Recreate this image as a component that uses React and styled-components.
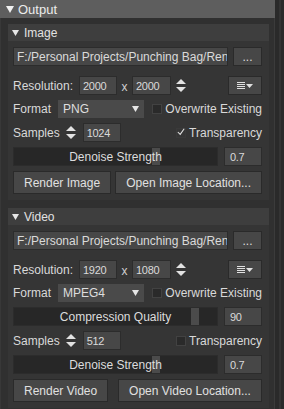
import React from 'react';
import styled, { createGlobalStyle } from 'styled-components';

const GlobalStyle = createGlobalStyle`
  html, body {
    margin: 0;
    padding: 0;
    background: #2b2b2b;
  }
  * {
    box-sizing: border-box;
  }
`;

const Arrow = ({ w = 7, h = 6, color = '#e6e6e6' }) => (
  <svg width={w} height={h} viewBox={`0 0 ${w} ${h}`}>
    <polygon points={`0,0 ${w},0 ${w / 2},${h}`} fill={color} />
  </svg>
);

const SpinIcon = () => (
  <svg width="10" height="13" viewBox="0 0 10 13">
    <polygon points="0,5 10,5 5,0" fill="#e2e2e2" />
    <polygon points="0,8 10,8 5,13" fill="#e2e2e2" />
  </svg>
);

const MenuIcon = () => (
  <svg width="16" height="8" viewBox="0 0 16 8">
    <rect x="0" y="0" width="8" height="1" fill="#e0e0e0" />
    <rect x="0" y="2" width="8" height="1" fill="#e0e0e0" />
    <rect x="0" y="4" width="8" height="1" fill="#e0e0e0" />
    <rect x="0" y="6" width="8" height="1" fill="#e0e0e0" />
    <polygon points="9,2 16,2 12.5,6" fill="#e0e0e0" />
  </svg>
);

const CheckMark = () => (
  <svg width="10" height="10" viewBox="0 0 10 10">
    <polyline points="1,5 4,8 9,1" fill="none" stroke="#e4e4e4" strokeWidth="1.3" />
  </svg>
);

const Root = styled.div`
  display: flex;
  width: 284px;
  height: 409px;
  overflow: hidden;
  background: #2b2b2b;
  font-family: 'Liberation Sans', Arial, sans-serif;
  color: #d9d9d9;
`;

const Panel = styled.div`
  width: 275px;
  display: flex;
  flex-direction: column;
`;

const PanelHeader = styled.div`
  height: 18px;
  flex: 0 0 18px;
  background: #5e5e5e;
  display: flex;
  align-items: center;
  gap: 4px;
  padding-left: 6px;
  font-size: 13px;
  color: #ececec;
`;

const PanelBody = styled.div`
  flex: 1;
  background: #303030;
  border-left: 1px solid #383838;
  border-right: 1px solid #3b3b3b;
  padding: 6px 5px 0 7px;
  display: flex;
  flex-direction: column;
  gap: 8px;
`;

const Scrollbar = styled.div`
  flex: 1;
  background: #2a2a2a;
  border-left: 4px solid #2a2a2a;
  display: flex;
  & > div {
    width: 2px;
    background: #343434;
  }
`;

const Section = styled.div`
  display: flex;
  flex-direction: column;
`;

const SectionHeader = styled.div`
  height: 17px;
  background: #3e3e3e;
  display: flex;
  align-items: center;
  gap: 5px;
  padding-left: 4px;
  font-size: 12px;
  color: #e2e2e2;
`;

const SectionBody = styled.div`
  background: #353535;
  padding: 6px 7px 6px 5px;
  display: flex;
  flex-direction: column;
  gap: 5px;
`;

const Row = styled.div`
  display: flex;
  align-items: center;
  height: ${(p) => p.h || 19}px;
  gap: ${(p) => p.gap || 0}px;
  margin-bottom: ${(p) => p.mb || 0}px;
  justify-content: ${(p) => p.justify || 'flex-start'};
`;

const Label = styled.span`
  font-size: 12px;
  white-space: nowrap;
  color: #d9d9d9;
  margin-right: ${(p) => p.mr || 0}px;
`;

const Field = styled.div`
  height: 19px;
  width: ${(p) => (p.w ? `${p.w}px` : 'auto')};
  flex: ${(p) => (p.w ? '0 0 auto' : '1')};
  min-width: 0;
  background: #474747;
  border: 1px solid #2c2c2c;
  display: flex;
  align-items: center;
  padding-left: ${(p) => p.pl || 3}px;
  font-size: ${(p) => (p.num ? 11 : 12)}px;
  letter-spacing: ${(p) => (p.num ? '-0.3px' : '0')};
  color: #dadada;
  overflow: hidden;
  white-space: nowrap;
`;

const PathText = styled.span`
  display: block;
  overflow: hidden;
  white-space: nowrap;
  max-width: 100%;
`;

const SmallButton = styled.div`
  width: ${(p) => p.w}px;
  height: 19px;
  background: #474747;
  border: 1px solid #2a2a2a;
  display: flex;
  align-items: center;
  justify-content: center;
  font-size: 12px;
  color: #dedede;
  margin-left: ${(p) => (p.push ? 'auto' : '0')};
`;

const Times = styled.span`
  width: 15px;
  text-align: center;
  font-size: 12px;
  color: #d0d0d0;
  padding-top: 3px;
`;

const Spin = styled.div`
  display: flex;
  align-items: center;
  margin: 0 ${(p) => p.mr || 0}px 0 ${(p) => p.ml || 0}px;
`;

const Select = styled.div`
  width: 91px;
  height: 18px;
  background: #4a4a4a;
  display: flex;
  align-items: center;
  justify-content: space-between;
  padding: 0 5px 0 5px;
  font-size: 12px;
  color: #dedede;
  margin-right: 8px;
`;

const Check = styled.div`
  display: flex;
  align-items: center;
  gap: 3px;
  margin-left: ${(p) => (p.right ? 'auto' : '0')};
`;

const Box = styled.div`
  width: 10px;
  height: 10px;
  background: ${(p) => (p.checked ? '#363636' : '#2a2a2a')};
  border: 1px solid ${(p) => (p.checked ? '#3a3a3a' : '#424242')};
  display: flex;
  align-items: center;
  justify-content: center;
  & svg {
    margin-top: -1px;
  }
`;

const Slider = styled.div`
  flex: 1;
  height: 19px;
  background: #272727;
  border: 1px solid #2c2c2c;
  position: relative;
  display: flex;
  align-items: center;
  justify-content: center;
  font-size: 12px;
  color: #dcdcdc;
`;

const Handle = styled.div`
  position: absolute;
  top: 0;
  bottom: 0;
  width: 8px;
  background: #4b4b4b;
`;

const SliderText = styled.span`
  position: relative;
`;

const Button = styled.div`
  height: 23px;
  padding: 0 10px;
  background: #474747;
  border: 1px solid #2a2a2a;
  display: flex;
  align-items: center;
  justify-content: center;
  font-size: 12px;
  color: #e0e0e0;
  white-space: nowrap;
  flex: ${(p) => (p.w ? `0 0 ${p.w}px` : '0 0 auto')};
`;

const SliderRow = ({ label, value, pos }) => (
  <Row gap={6}>
    <Slider>
      <Handle style={{ left: `${pos * 197}px` }} />
      <SliderText>{label}</SliderText>
    </Slider>
    <Field w={38} pl={5} num>
      {value}
    </Field>
  </Row>
);

const RenderSection = ({ title, res, format, checked, compression, samples, openWidth }) => (
  <Section>
    <SectionHeader>
      <Arrow />
      {title}
    </SectionHeader>
    <SectionBody>
      <Row gap={5} mb={5}>
        <Field>
          <PathText>F:/Personal Projects/Punching Bag/Rend</PathText>
        </Field>
        <SmallButton w={29}>...</SmallButton>
      </Row>
      <Row>
        <Label mr={6}>Resolution:</Label>
        <Field w={38} num>{res[0]}</Field>
        <Times>x</Times>
        <Field w={39} num>{res[1]}</Field>
        <Spin ml={5}>
          <SpinIcon />
        </Spin>
        <SmallButton w={34} push>
          <MenuIcon />
        </SmallButton>
      </Row>
      <Row h={18}>
        <Label mr={7}>Format</Label>
        <Select>
          {format}
          <Arrow />
        </Select>
        <Check>
          <Box />
          <Label>Overwrite Existing</Label>
        </Check>
      </Row>
      {compression && <SliderRow label="Compression Quality" value="90" pos={0.9} />}
      <Row>
        <Label mr={6}>Samples</Label>
        <Spin mr={7}>
          <SpinIcon />
        </Spin>
        <Field w={38} num>{samples}</Field>
        <Check right>
          <Box checked={checked}>{checked && <CheckMark />}</Box>
          <Label>Transparency</Label>
        </Check>
      </Row>
      <SliderRow label="Denoise Strength" value="0.7" pos={0.7} />
      <Row h={23} justify="space-between">
        <Button>Render {title}</Button>
        <Button w={openWidth}>Open {title} Location...</Button>
      </Row>
    </SectionBody>
  </Section>
);

export default function App() {
  return (
    <>
      <GlobalStyle />
      <Root>
        <Panel>
          <PanelHeader>
            <Arrow w={8} h={7} color="#f0f0f0" />
            Output
          </PanelHeader>
          <PanelBody>
            <RenderSection
              title="Image"
              res={['2000', '2000']}
              format="PNG"
              checked
              samples="1024"
              openWidth={146}
            />
            <RenderSection
              title="Video"
              res={['1920', '1080']}
              format="MPEG4"
              compression
              samples="512"
              openWidth={144}
            />
          </PanelBody>
        </Panel>
        <Scrollbar>
          <div />
        </Scrollbar>
      </Root>
    </>
  );
}
